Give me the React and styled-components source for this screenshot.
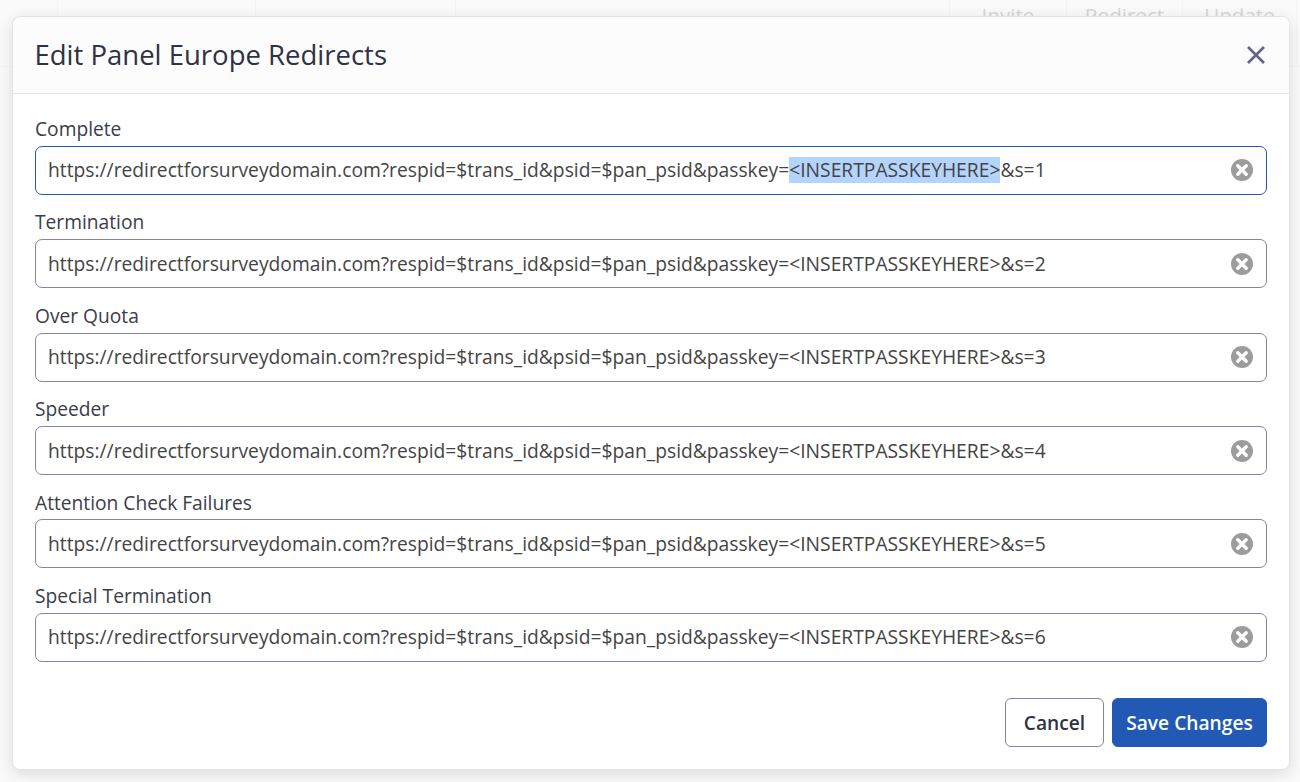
import React from "react";
import styled, { createGlobalStyle } from "styled-components";

const Global = createGlobalStyle`
  html, body { margin: 0; padding: 0; background: #fafafb; }
  body { font-family: "Open Sans", "Liberation Sans", sans-serif; width: 1300px; height: 782px; overflow: hidden; }
`;

const Page = styled.div`
  position: relative;
  width: 1300px;
  height: 782px;
  overflow: hidden;
  padding-top: 16px;
  box-sizing: border-box;
`;

/* the dimmed table that lies under the modal */
const Backdrop = styled.div`
  position: absolute;
  inset: 0;
  background: #fafafb;
`;

const BackRow = styled.div`
  display: flex;
  height: 66px;
  border-bottom: 1px solid #f4f4f6;
`;

const BackCell = styled.div`
  width: ${(p) => p.$w}px;
  flex: none;
  box-sizing: border-box;
  border-right: 1px solid #f4f4f6;
  text-align: center;
  font-size: 20.6px;
  line-height: 30px;
  color: #d6d6d9;
`;

const Modal = styled.div`
  position: relative;
  width: 1278px;
  height: 754px;
  margin-left: 12px;
  box-sizing: border-box;
  background: #fff;
  border: 1px solid #e4e4e4;
  border-radius: 8px;
  box-shadow: 0 4px 16px rgba(0, 0, 0, 0.12);
  display: flex;
  flex-direction: column;
`;

const Header = styled.header`
  height: 77px;
  flex: none;
  box-sizing: border-box;
  padding: 0 23.5px 0 21.5px;
  display: flex;
  align-items: center;
  justify-content: space-between;
  background: #fcfcfc;
  border-bottom: 1px solid #e4e4e4;
  border-radius: 8px 8px 0 0;
`;

const Title = styled.h1`
  margin: 0;
  font-size: 27.5px;
  font-weight: 400;
  line-height: 36px;
  color: #2e3243;
`;

const CloseButton = styled.button`
  border: 0;
  background: none;
  padding: 0;
  width: 20px;
  height: 20px;
  display: flex;
  cursor: pointer;
`;

const Form = styled.div`
  padding: 21.1px 22px 0;
  display: flex;
  flex-direction: column;
`;

const Field = styled.div`
  height: 93.4px;
  flex: none;
`;

const Label = styled.div`
  font-size: 19.2px;
  line-height: 28px;
  color: #3a3d4a;
`;

const InputBox = styled.div`
  margin-top: 2.8px;
  height: 49px;
  box-sizing: border-box;
  border: 1.5px solid ${(p) => (p.$focused ? "#2459b3" : "#8285a6")};
  border-radius: 7px;
  padding: 0 13.5px 0 12px;
  display: flex;
  align-items: center;
  justify-content: space-between;
  background: #fff;
`;

const Url = styled.span`
  font-size: 19.26px;
  line-height: 28px;
  color: #444;
  white-space: nowrap;
`;

const Selected = styled.span`
  background: #b5d4fd;
  display: inline-block;
  line-height: 26px;
`;

const Clear = styled.svg`
  width: 22px;
  height: 22px;
  flex: none;
`;

const Footer = styled.footer`
  margin-top: 22.6px;
  padding: 0 22px;
  display: flex;
  justify-content: flex-end;
  gap: 8px;
`;

const Button = styled.button`
  height: 49px;
  box-sizing: border-box;
  border-radius: 6px;
  font-family: inherit;
  font-size: 19.2px;
  font-weight: 600;
  padding: 0;
  width: ${(p) => p.$w}px;
  color: ${(p) => (p.$primary ? "#fff" : "#2e3243")};
  background: ${(p) => (p.$primary ? "#2259b5" : "#fff")};
  border: 1.5px solid ${(p) => (p.$primary ? "#2259b5" : "#8285a6")};
`;

const rows = [
  ["Complete", 1],
  ["Termination", 2],
  ["Over Quota", 3],
  ["Speeder", 4],
  ["Attention Check Failures", 5],
  ["Special Termination", 6],
];

const base = "https://redirectforsurveydomain.com?respid=$trans_id&psid=$pan_psid&passkey=";
const key = "<INSERTPASSKEYHERE>";

const ClearIcon = () => (
  <Clear viewBox="0 0 22 22">
    <circle cx="11" cy="11" r="11" fill="#9c9c9c" />
    <path d="M6.8 6.8l8.4 8.4M15.2 6.8l-8.4 8.4" stroke="#fff" strokeWidth="3.4" strokeLinecap="round" />
  </Clear>
);

export default function App() {
  return (
    <>
      <Global />
      <Page>
        <Backdrop>
          <BackRow>
            <BackCell $w={58} />
            <BackCell $w={198} />
            <BackCell $w={200} />
            <BackCell $w={494} />
            <BackCell $w={117}>Invite</BackCell>
            <BackCell $w={116}>Redirect</BackCell>
            <BackCell $w={114}>Update</BackCell>
          </BackRow>
        </Backdrop>
        <Modal>
          <Header>
            <Title>Edit Panel Europe Redirects</Title>
            <CloseButton aria-label="Close">
              <svg width="20" height="20" viewBox="0 0 20 20">
                <path d="M2 2l16 16M18 2L2 18" stroke="#5f6488" strokeWidth="2.6" fill="none" />
              </svg>
            </CloseButton>
          </Header>
          <Form>
            {rows.map(([label, n]) => (
              <Field key={n}>
                <Label>{label}</Label>
                <InputBox $focused={n === 1}>
                  <Url>
                    {base}
                    {n === 1 ? <Selected>{key}</Selected> : key}
                    &amp;s={n}
                  </Url>
                  <ClearIcon />
                </InputBox>
              </Field>
            ))}
          </Form>
          <Footer>
            <Button $w={99}>Cancel</Button>
            <Button $primary $w={155}>Save Changes</Button>
          </Footer>
        </Modal>
      </Page>
    </>
  );
}
